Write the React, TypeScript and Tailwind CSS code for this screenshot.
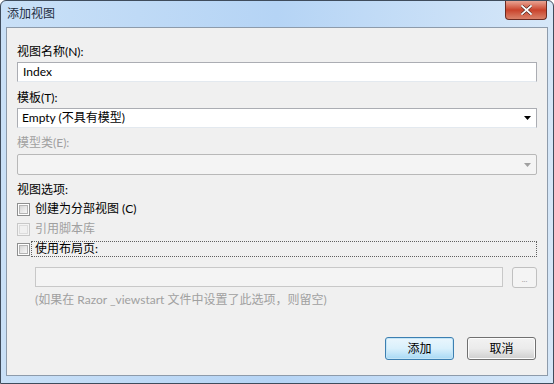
const font = { fontFamily: 'Lato, "Noto Sans CJK SC", sans-serif' };

function Checkbox({ disabled }: { disabled?: boolean }) {
  return (
    <div
      className={`w-[13px] h-[13px] border flex items-center justify-center shrink-0 ${
        disabled ? 'border-[#c8c8c8] bg-[#f4f4f4]' : 'border-[#8e8f8f] bg-white'
      }`}
    >
      <div
        className={`w-[9px] h-[9px] border ${
          disabled
            ? 'border-[#dcdcdc] bg-[#f0f0f0]'
            : 'border-[#b4b4b4] bg-gradient-to-br from-[#d6d6d6] to-[#f8f8f8]'
        }`}
      />
    </div>
  );
}

function Arrow({ color }: { color: string }) {
  return (
    <svg width="7" height="4" viewBox="0 0 7 4" className="mr-[5px]">
      <path d="M0 0h7L3.5 4z" fill={color} />
    </svg>
  );
}

export default function App() {
  return (
    <div
      className="w-[554px] h-[384px] relative overflow-hidden rounded-t-[6px] border border-[#3f4c5c] bg-gradient-to-r from-[#c9e0f7] via-[#b5d4f5] to-[#d6e7f8] text-[12px] text-black flex flex-col"
      style={font}
    >
      {/* Title bar */}
      <div className="h-[26px] flex items-center pl-[6px] shrink-0">
        <span className="text-[12px] leading-none text-[#1e2d3f]">添加视图</span>
      </div>
      <div className="absolute top-0 right-[6px] w-[42px] h-[19px] rounded-b-[4px] border border-t-0 border-[#6b2b22] bg-gradient-to-b from-[#e8a393] via-[#c9422b] to-[#d9826a] flex items-center justify-center">
        <svg width="11" height="10" viewBox="0 0 11 10">
          <path d="M1 1l9 8M10 1l-9 8" stroke="#3a1a14" strokeWidth="3" strokeLinecap="square" />
          <path d="M1 1l9 8M10 1l-9 8" stroke="#ffffff" strokeWidth="1.8" strokeLinecap="square" />
        </svg>
      </div>

      {/* Client area */}
      <div className="mx-[5px] h-[349px] border border-[#8d9bab] bg-[#f0f0f0] px-[10px] pt-[16px] flex flex-col">
        <div className="h-[16px] leading-[16px]">视图名称(N):</div>
        <div className="mt-[2px] h-[20px] border border-[#abadb3] border-b-[#e3e9ef] bg-white flex items-center pl-[5px]">
          Index
        </div>

        <div className="mt-[8px] h-[16px] leading-[16px]">模板(T):</div>
        <div className="mt-[2px] h-[20px] border border-[#abadb3] border-b-[#e3e9ef] bg-white flex items-center justify-between pl-[4px]">
          <span>Empty (不具有模型)</span>
          <Arrow color="#000000" />
        </div>

        <div className="mt-[7px] h-[16px] leading-[16px] text-[#a0a0a0]">模型类(E):</div>
        <div className="mt-[3px] h-[21px] border border-[#b8b8b8] rounded-[2px] bg-[#f4f4f4] flex items-center justify-end">
          <Arrow color="#a0a0a0" />
        </div>

        <div className="mt-[7px] h-[16px] leading-[16px]">视图选项:</div>
        <div className="mt-[3px] h-[16px] flex items-center gap-[5px]">
          <Checkbox />
          <span>创建为分部视图 (C)</span>
        </div>
        <div className="mt-[4px] h-[16px] flex items-center gap-[5px] text-[#a0a0a0]">
          <Checkbox disabled />
          <span>引用脚本库</span>
        </div>
        <div className="mt-[4px] h-[16px] flex items-center">
          <Checkbox />
          <div className="ml-[1px] flex-1 h-[16px] border border-dotted border-[#606060] flex items-center pl-[3px]">
            使用布局页:
          </div>
        </div>

        <div className="mt-[10px] h-[20px] flex items-center pl-[18px] gap-[9px]">
          <div className="flex-1 h-[20px] border border-[#c8c8c8] bg-[#f4f4f4]" />
          <div className="w-[25px] h-[21px] rounded-[3px] border border-[#c0c0c0] bg-[#f4f4f4] flex items-center justify-center text-[8px] text-[#a0a0a0] leading-none pt-[3px]">
            ...
          </div>
        </div>
        <div className="mt-[5px] h-[16px] leading-[16px] pl-[18px] text-[#a0a0a0]">
          (如果在 Razor _viewstart 文件中设置了此选项，则留空)
        </div>

        <div className="mt-[29px] flex justify-end gap-[13px] pr-[1px]">
          <div className="w-[69px] h-[23px] rounded-[3px] border border-[#3c7fb1] bg-gradient-to-b from-[#eaf6fd] via-[#d9f0fc] to-[#a7d9f5] flex items-center justify-center shadow-[inset_0_0_0_1px_#c4e5f6]">
            添加
          </div>
          <div className="w-[69px] h-[23px] rounded-[3px] border border-[#707070] bg-gradient-to-b from-[#f2f2f2] via-[#ebebeb] to-[#cfcfcf] flex items-center justify-center shadow-[inset_0_0_0_1px_#fcfcfc]">
            取消
          </div>
        </div>
      </div>
    </div>
  );
}
